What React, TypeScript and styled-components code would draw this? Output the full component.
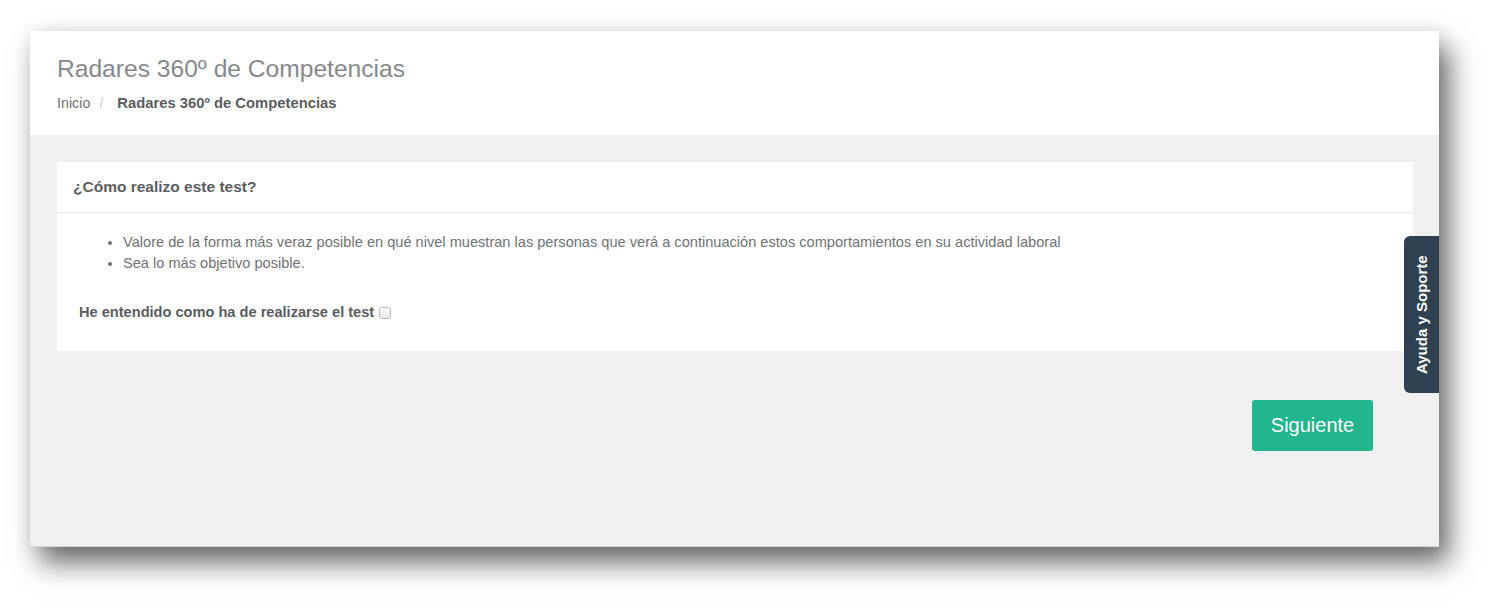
import React from "react";
import styled, { createGlobalStyle } from "styled-components";

const GlobalStyle = createGlobalStyle`
  html, body {
    margin: 0;
    padding: 0;
    background: #ffffff;
    overflow: hidden;
  }
  body {
    font-family: "Liberation Sans", Arial, sans-serif;
    color: #676a6c;
  }
  * {
    box-sizing: border-box;
  }
`;

const Page = styled.div`
  width: 1500px;
  height: 609px;
  padding: 31px 0 0 30px;
`;

const Window = styled.div`
  position: relative;
  width: 1409px;
  height: 516px;
  background: #f0f0f0;
  border-bottom: 1px solid #d6d6d6;
  box-shadow: 10px 16px 26px rgba(0, 0, 0, 0.58), 0 0 18px rgba(0, 0, 0, 0.08);
  overflow: hidden;
`;

const Header = styled.header`
  background: #ffffff;
  height: 104px;
  padding: 24px 27px 0;
`;

const Title = styled.h2`
  margin: 0 0 11px;
  font-size: 24.6px;
  line-height: 27px;
  font-weight: 300;
  color: #86898b;
`;

const Breadcrumb = styled.ol`
  display: flex;
  align-items: center;
  margin: 0;
  padding: 0;
  list-style: none;
  font-size: 14px;
  line-height: 20px;
`;

const Crumb = styled.li<{ $active?: boolean }>`
  font-weight: ${({ $active }) => ($active ? 700 : 400)};
  font-size: ${({ $active }) => ($active ? "14.8px" : "14.3px")};
  color: ${({ $active }) => ($active ? "#5a5d5f" : "#717476")};
`;

const Separator = styled.li`
  color: #cccccc;
  padding: 0 14px 0 9px;
`;

const Content = styled.main`
  padding: 26px 26px 0 27px;
`;

const Panel = styled.section`
  background: #ffffff;
  border-top: 1px solid #e9eaeb;
`;

const PanelHeading = styled.div`
  padding: 14px 16px 15px;
  border-bottom: 1px solid #e7eaec;
  font-size: 15.5px;
  line-height: 21px;
  font-weight: 700;
  color: #5a5d5f;
`;

const PanelBody = styled.div`
  padding: 19px 22px 29px;
`;

const Bullets = styled.ul`
  margin: 0 0 28px;
  padding-left: 44px;
  font-size: 14.6px;
  line-height: 21px;
  color: #6f7274;
`;

const Agreement = styled.label`
  display: flex;
  align-items: center;
  font-size: 14.6px;
  line-height: 20px;
  font-weight: 700;
  color: #5a5d5f;
`;

const Check = styled.input`
  appearance: none;
  width: 12px;
  height: 12px;
  margin: 1px 0 0 5px;
  border: 1px solid #b9b9b9;
  border-radius: 3px;
  background: linear-gradient(#fbfbfb, #e9e9e9);
`;

const Footer = styled.div`
  display: flex;
  justify-content: flex-end;
  padding: 49px 40px 0 0;
`;

const NextButton = styled.button`
  width: 121px;
  height: 51px;
  border: none;
  border-radius: 3px;
  background: #22b68f;
  color: #ffffff;
  font-family: "Liberation Sans", Arial, sans-serif;
  font-size: 20px;
  cursor: pointer;
`;

const SupportTab = styled.div`
  position: absolute;
  right: 0;
  top: 205px;
  width: 35px;
  height: 157px;
  display: flex;
  align-items: center;
  justify-content: center;
  background: #2f4050;
  border-radius: 0 6px 6px 0;
  color: #ffffff;
  font-size: 15px;
  font-weight: 700;
  writing-mode: vertical-rl;
  transform: rotate(180deg);
`;

export default function App() {
  return (
    <>
      <GlobalStyle />
      <Page>
        <Window>
          <Header>
            <Title>Radares 360º de Competencias</Title>
            <Breadcrumb>
              <Crumb>Inicio</Crumb>
              <Separator>/</Separator>
              <Crumb $active>Radares 360º de Competencias</Crumb>
            </Breadcrumb>
          </Header>
          <Content>
            <Panel>
              <PanelHeading>¿Cómo realizo este test?</PanelHeading>
              <PanelBody>
                <Bullets>
                  <li>
                    Valore de la forma más veraz posible en qué nivel muestran las personas que verá a
                    continuación estos comportamientos en su actividad laboral
                  </li>
                  <li>Sea lo más objetivo posible.</li>
                </Bullets>
                <Agreement>
                  He entendido como ha de realizarse el test
                  <Check type="checkbox" />
                </Agreement>
              </PanelBody>
            </Panel>
            <Footer>
              <NextButton type="button">Siguiente</NextButton>
            </Footer>
          </Content>
          <SupportTab>Ayuda y Soporte</SupportTab>
        </Window>
      </Page>
    </>
  );
}
